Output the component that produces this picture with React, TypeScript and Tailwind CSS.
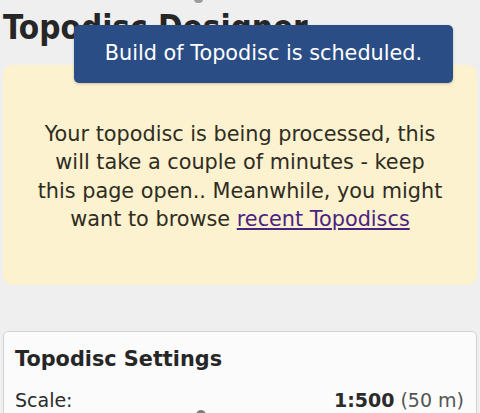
import React from "react";

const Toast: React.FC<{ message: string }> = ({ message }) => (
  <div className="absolute left-[74px] top-[25px] flex h-[58px] w-[379px] items-center justify-center rounded-[5px] bg-[#2a4d86] text-[20.8px] text-white shadow-[0_1px_3px_rgba(0,0,0,0.2)]">
    {message}
  </div>
);

export default function App() {
  return (
    <div className="relative h-[413px] overflow-hidden bg-[#efefef] font-['DejaVu_Sans',sans-serif] text-[#2b2b2b]">
      <div className="flex h-[4px] pl-[194px]">
        <div className="-mt-[5px] h-[8px] w-[9px] rounded-full bg-[#9c9c9c]" />
      </div>

      <h1 className="ml-[3px] mt-[4px] font-['DejaVu_Sans_Condensed','DejaVu_Sans',sans-serif] text-[33px] font-bold leading-[40px] text-[#262626]">
        Topodisc Designer
      </h1>

      <div className="mx-[3px] mt-[17px] h-[220px] rounded-[9px] bg-[#fcf2cf] pt-[55px] text-[#2f2c22]">
        <p className="mx-auto w-[413px] text-center text-[20.8px] leading-[28.3px]">
          Your topodisc is being processed, this will take a couple of minutes - keep this page open.. Meanwhile, you might want to browse{" "}
          <a href="#" className="text-[#4a2382] underline">
            recent Topodiscs
          </a>
        </p>
      </div>

      <div className="mx-[3px] mt-[46px] rounded-[5px] border border-[#d2d2d2] bg-[#fbfbfb] pl-[11px] pr-[12px] pt-[13px]">
        <h2 className="text-[20.8px] font-bold leading-[28px] text-[#262626]">Topodisc Settings</h2>
        <div className="mt-[14px] flex items-baseline justify-between text-[19px] leading-[26px]">
          <span>Scale:</span>
          <span>
            <b>1:500</b> <span className="text-[#555]">(50 m)</span>
          </span>
        </div>
        <div className="-mt-[3px] flex h-[20px] pl-[181px]">
          <div className="h-[12px] w-[10px] rounded-full bg-[#7d7d7d]" />
        </div>
      </div>

      <Toast message="Build of Topodisc is scheduled." />
    </div>
  );
}
